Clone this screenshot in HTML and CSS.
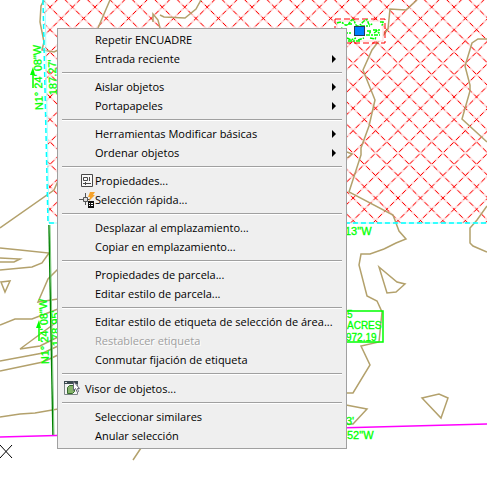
FILE: index.html
```html
<!DOCTYPE html>
<html lang="es">
<head>
<meta charset="utf-8">
<title>Dibujo</title>
<link rel="stylesheet" href="styles.css">
</head>
<body>
<svg class="drawing" viewBox="0 0 487 480" preserveAspectRatio="xMinYMin slice" aria-hidden="true">
  <defs>
    <clipPath id="parcel"><path d="M44 0H487V223H48.500Z"/></clipPath>
  </defs>
  <g clip-path="url(#parcel)">
    <path id="hatch-glow" class="hatch-glow"/>
    <path id="hatch-up" class="hatch"/>
    <path id="hatch-down" class="hatch"/>
  </g>
  <g class="contour">
    <path d="M44 0L41 6L40 22L44 42L42 50L54 52L58 50"/>
    <path d="M110 0L98 28M160 28L158 20L153 14L153 22"/>
    <path d="M201 0L196 9L185 18L164 17L160 15"/>
    <path d="M417 0L406 10L390 9L388 29L372 50L363 70L375 100L369 126L361 148L361 155L349 192L393 215L399 231L406 239L396 243L384 249"/>
    <path d="M487 39L478 39L472 43L465 66L470 85L470 91L462 119L487 142M347 152L352 154L347 158"/>
    <path d="M487 206L477 220L470 228L470 243L473 246L487 252"/>
    <path d="M384 249L370 254L361 254L359 265L367 296L377 301L382 312L379 342L361 346L370 365L353 393L346 393"/>
    <path d="M379 267L397 282L405 284L396 292L387 293Z"/>
    <path d="M346 405L367 409L353 424L346 424M422 398L439 394L448 398L441 418Z"/>
    <path d="M0 228L54 190L58 181M0 248L20 250L49 253L42 263L32 267L0 270M0 258L20 259L14 262L0 262M1 282L10 281L5 292Z"/>
    <path d="M58 269L48 279L38 302L58 299M0 325L15 319L32 319L58 309M58 321L20 349L40 346L58 337M0 361L43 353L58 346M0 371L43 362L58 355M0 417L20 414L35 413L58 409M133 460L141 448"/>
  </g>
  <path class="cyan-soft" d="M45 0L49 223H487"/>
  <path class="cyan" d="M43 0L48 223H487"/>
  <path class="green-line" d="M49 225L53 436"/>
  <path class="green-light" d="M50 225L54 436"/>
  <path class="magenta" d="M0 437L487 424"/>
  <path class="cross" d="M0 445L12 458M12 445L0 458"/>
  <path class="leader" d="M33 88V74M39 341V327"/>
  <path class="arrow" d="M30 75L33 67L35 75ZM36 328L39 320L41 328Z"/>
  <g class="cad">
    <text transform="translate(43 110) rotate(-92)">N1° 24' 08"W</text>
    <text transform="translate(57 95) rotate(-92)">187.27'</text>
    <text transform="translate(49 364) rotate(-92)">N1° 24' 08"W</text>
    <text transform="translate(60 346) rotate(-92)">178.95'</text>
    <text x="345" y="235">13"W</text>
    <text x="345" y="220">'</text>
    <text x="346" y="425">3'</text>
    <text x="347" y="439">52"W</text>
  </g>
  <g class="cad cad-small">
    <text x="347" y="318">5</text>
    <text x="347" y="329">ACRES</text>
    <text x="346" y="341">972.19</text>
  </g>
  <path class="label-box" d="M346 311H383V342H346"/>
  <path class="tag-edge" d="M335 19H385V43H335Z"/>
  <path class="tag-fill" d="M337 21H383V41H337Z"/>
  <g class="tag-text">
    <path d="M337 23q4-2 7 1t6-2t5 1t7 0t6-1t5 1M380 22h3v2l-2 2M337 31l4-3 5 2M367 31h4l-2 3M373 30h8M374 33l3-2 3 3M347 38l4 2 5-2M358 40l6-2M370 38l5 1 1-2"/>
    <path d="M348 24h5M361 26h9M344 33h8M366 35h14M348 41h12"/>
  </g>
  <rect class="grip" x="354.500" y="26.500" width="10" height="9"/>
</svg>

<div class="menu" role="menu">
  <div class="group">
    <button class="item" role="menuitem">Repetir ENCUADRE</button>
    <button class="item sub" role="menuitem">Entrada reciente</button>
  </div>
  <div class="group">
    <button class="item sub" role="menuitem">Aislar objetos</button>
    <button class="item sub" role="menuitem">Portapapeles</button>
  </div>
  <div class="group">
    <button class="item sub" role="menuitem">Herramientas Modificar básicas</button>
    <button class="item sub" role="menuitem">Ordenar objetos</button>
  </div>
  <div class="group">
    <button class="item" role="menuitem"><svg class="icon" viewBox="0 0 18 18" aria-hidden="true"><path d="M4.500 2.500h11v12h-11z" fill="#f8f8f8" stroke="#484848"/><path d="M6.500 5.500h4v3h-4zM12.500 5v4M6 11.500h8M8.500 10v3" fill="none" stroke="#484848"/></svg>Propiedades...</button>
    <button class="item" role="menuitem"><svg class="icon" viewBox="0 0 18 18" aria-hidden="true"><path d="M2 8.500h4M10 8.500h3M8.500 2v4M8.500 11v3" stroke="#555"/><path d="M6.500 6.500h4v4h-4z" fill="#ddd" stroke="#555"/><path d="M13 1h5l-2 3h2l-6 6 1-4h-2z" fill="#f5a32c"/><path d="M11 10h6v7h-6z" fill="#111"/><path d="M12 12h1v1h-1zM14 12h2v1h-2zM12 14h1v1h-1zM14 14h2v1h-2z" fill="#fff"/></svg>Selección rápida...</button>
  </div>
  <div class="group">
    <button class="item" role="menuitem">Desplazar al emplazamiento...</button>
    <button class="item" role="menuitem">Copiar en emplazamiento...</button>
  </div>
  <div class="group">
    <button class="item" role="menuitem">Propiedades de parcela...</button>
    <button class="item" role="menuitem">Editar estilo de parcela...</button>
  </div>
  <div class="group">
    <button class="item" role="menuitem">Editar estilo de etiqueta de selección de área...</button>
    <button class="item" role="menuitem" disabled>Restablecer etiqueta</button>
    <button class="item" role="menuitem">Conmutar fijación de etiqueta</button>
  </div>
  <div class="group">
    <button class="item viewer" role="menuitem"><svg class="icon" viewBox="0 0 18 18" aria-hidden="true"><path d="M1.500 2.500h13v13h-13z" fill="#f4f4f4" stroke="#7d8588"/><path d="M1 2h14v3H1z" fill="#3c4a50"/><path d="M2 3h2v1H2z" fill="#ddd"/><path d="M4.500 8.500l2-2h5v6l-2 2h-5z" fill="#86b36b" stroke="#356b2c"/><path d="M10.500 2.500v9l2-2 2 4 1-1-1-3h2z" fill="#fff" stroke="#667"/></svg>Visor de objetos...</button>
  </div>
  <div class="group">
    <button class="item" role="menuitem">Seleccionar similares</button>
    <button class="item" role="menuitem">Anular selección</button>
  </div>
</div>
<script src="hatch.js"></script>
</body>
</html>
```
FILE: styles.css
```css
*, *::before, *::after { box-sizing: border-box; }
body {
  margin: 0;
  min-height: 100vh;
  padding: 28px 0 0 57px;
  background: #fff;
  overflow: hidden;
  font-family: "Open Sans", "Noto Sans", sans-serif;
}
.drawing {
  position: absolute;
  top: 0;
  left: 0;
  width: 100%;
  height: 100%;
}
.drawing path { fill: none; }
.drawing .hatch-glow { stroke: #ffdcdc; stroke-width: 2; }
.drawing .hatch { stroke: #f00; stroke-width: 1; stroke-dasharray: 5 3.460; stroke-dashoffset: 2.500; }
.contour { stroke: #b3a16c; stroke-width: 1.500; }
.cyan { stroke: #0ff; stroke-width: 1.500; stroke-dasharray: 5 3; }
.cyan-soft { stroke: #a8ffff; }
.green-line { stroke: #008000; stroke-width: 1.500; }
.green-light { stroke: #7fc97f; stroke-width: 1; }
.magenta { stroke: #f0f; stroke-width: 1.500; }
.cross { stroke: #000; }
.leader { stroke: #0f0; stroke-width: 1.500; }
.drawing .arrow { fill: #0f0; }
.cad { fill: #0f0; stroke: #0f0; stroke-width: 0.300; font: 11px "Liberation Sans", sans-serif; }
.cad-small { font-size: 10px; }
.label-box { stroke: #0f0; stroke-width: 1.500; }
.tag-edge { stroke: #f00; stroke-dasharray: 6 3; }
.drawing .tag-fill { fill: #fff; stroke: #ffd8d8; }
.tag-text { stroke: #0f0; stroke-width: 1.500; stroke-dasharray: 4 1 2 1; }
.grip { fill: #0080ff; stroke: #24385a; }

.menu {
  position: relative;
  width: 290px;
  padding: 1px 1px 3px;
  border: 1px solid #a0a0a0;
  background: #efefef;
}
.group + .group::before {
  content: "";
  display: block;
  height: 9px;
  margin: 0 3px;
  background: linear-gradient(#efefef 4px, #a0a0a0 4px, #a0a0a0 5px, #fff 5px, #fff 6px, #efefef 6px);
}
.item {
  display: flex;
  align-items: center;
  width: 100%;
  height: 19px;
  padding: 0 9px 0 36px;
  border: 0;
  background: none;
  color: #000;
  font: inherit;
  font-size: 11px;
  line-height: 19px;
  text-align: left;
  white-space: nowrap;
}
.item:disabled { color: #a0a0a0; text-shadow: 1px 1px #fff; }
.sub::after {
  content: "";
  margin-left: auto;
  border: solid transparent;
  border-width: 4px 0 4px 4px;
  border-left-color: #000;
}
.icon { flex: none; width: 18px; height: 18px; margin-left: -18px; }
.viewer { height: 20px; padding-left: 26px; }
.viewer .icon { margin: 0 4px 0 -22px; }
```
FILE: hatch.js
```js
// Cross hatch: two families of diagonals meeting on a common row of nodes.
const STEP = 22.45;
const ROW = 198;
const NODE = 398;
let up = "";
let down = "";
for (let k = -28; k <= 14; k++) {
  const x = NODE + k * STEP;
  up += `M${x} ${ROW}l200 -200M${x} ${ROW}l-200 -200`;
  down += `M${x} ${ROW}l30 30M${x} ${ROW}l-30 30`;
}
document.getElementById("hatch-up").setAttribute("d", up);
document.getElementById("hatch-down").setAttribute("d", down);
document.getElementById("hatch-glow").setAttribute("d", up + down);
```
